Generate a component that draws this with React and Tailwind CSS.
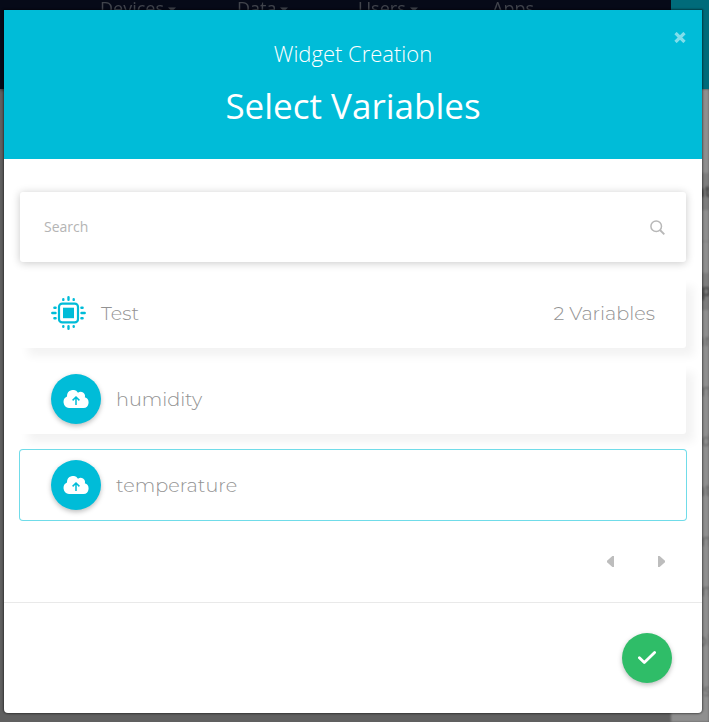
const navItems = [
  { label: "Devices", caret: true, box: "w-[137px]" },
  { label: "Data", caret: true, box: "w-[121px]" },
  { label: "Users", caret: true, box: "w-[134px]" },
  { label: "Apps", caret: false, box: "w-[80px]" },
];

const sideRows = [
  { text: "Dat", heading: true },
  { text: "", divider: true },
  { text: "App", heading: true },
  { text: "Var" },
  { text: "Tin" },
  { text: "Red" },
  { text: "Dat" },
  { text: "Con" },
  { text: "Min" },
  { text: "Col" },
  { text: "Us" },
];

const variables = [
  { name: "humidity", selected: false },
  { name: "temperature", selected: true },
];

function Backdrop() {
  return (
    <div className="flex h-full flex-col bg-[#606060]">
      <div className="flex h-[89px] shrink-0 bg-[#060a18] shadow-[0_1px_3px_#333]">
        <nav className="flex w-[671px] pl-[100px] text-[18px] leading-[16px] text-[#41444c] blur-[0.5px]">
          {navItems.map((item) => (
            <div key={item.label} className={`flex shrink-0 gap-1 ${item.box}`}>
              <span>{item.label}</span>
              {item.caret && (
                <svg width="8" height="18" viewBox="0 0 8 18" fill="currentColor">
                  <path d="M0 7.5h8l-4 4z" />
                </svg>
              )}
            </div>
          ))}
        </nav>
        <div className="flex-1 bg-[#006b7a]" />
      </div>
      <div className="flex flex-1 justify-end overflow-hidden">
        <aside className="w-[38px] bg-[#8f8f8f] pt-[84px] text-[16px] text-[#666] blur-[0.8px]">
          {sideRows.map((row, i) => (
            <div
              key={i}
              className={`flex h-[37px] items-center justify-end ${
                row.heading
                  ? "mb-[12.5px] bg-[#7e7e7e] font-semibold text-[#444]"
                  : "mb-[13px]"
              }`}
            >
              {row.divider ? (
                <span className="h-px w-full bg-[#808080]" />
              ) : (
                <span className="-mr-0.5 -mt-0.5">{row.text}</span>
              )}
            </div>
          ))}
        </aside>
      </div>
    </div>
  );
}

function ChipIcon() {
  return (
    <svg width="35" height="34" viewBox="0 0 35 34" fill="none" stroke="#00bcd8" strokeLinecap="round">
      <rect x="8" y="7.6" width="19" height="18.8" rx="3.2" strokeWidth="2.2" />
      <rect x="12" y="11.7" width="11" height="10.5" fill="#00bcd8" stroke="none" />
      <path
        strokeWidth="2.4"
        d="M17.5 1.2v2.6M17.5 30.2v2.6M1.3 17h3.2M30.5 17h3.2M12.3 3.2v.7M22.7 3.2v.7M12.3 30.1v.7M22.7 30.1v.7M3.4 11.8h1.2M3.4 22.2h1.2M30.4 11.8h1.2M30.4 22.2h1.2"
      />
    </svg>
  );
}

function CloudBadge() {
  return (
    <span className="flex size-[50px] shrink-0 items-center justify-center rounded-full bg-[#00bcd8] shadow-[0_2px_5px_rgba(0,0,0,0.26)]">
      <svg width="26" height="18" viewBox="0 0 26 18" className="-mt-px">
        <path
          fill="#fff"
          d="M6 18A6 6 0 0 1 4 6.6V6a6 6 0 0 1 11-3.3A4.3 4.3 0 0 1 21.8 7.3A5.5 5.5 0 0 1 20.5 18z"
        />
        <path fill="none" stroke="#00bcd8" strokeWidth="1.5" d="M13 15V7M9.6 10.4L13 7l3.4 3.4" />
      </svg>
    </span>
  );
}

export default function App() {
  return (
    <div className="relative h-[722px] w-[709px] overflow-hidden font-['Open_Sans',sans-serif]">
      <Backdrop />
      <div
        role="dialog"
        className="absolute top-[10px] left-1 flex h-[703px] w-[698px] flex-col overflow-hidden rounded-b-[4px] bg-white shadow-[0_0_2px_1px_rgba(0,0,0,0.45)]"
      >
        <header className="relative flex h-[149px] shrink-0 flex-col items-center bg-[#00bcd8] text-white">
          <p className="mt-[27px] text-[22px] leading-[32px] font-light">Widget Creation</p>
          <h1 className="mt-[12px] text-[35px] leading-[50px]">Select Variables</h1>
          <button aria-label="Close" className="absolute top-[22px] right-[16px] text-[#80deeb]">
            <svg width="12" height="11" viewBox="0 0 12 11" stroke="currentColor" strokeWidth="3.2">
              <path d="M1.5 1l9 9M10.5 1l-9 9" />
            </svg>
          </button>
        </header>

        <main className="flex h-[444px] shrink-0 flex-col border-b border-[#e9e9e9] px-4 pt-[33px] font-['Montserrat','Inter',sans-serif] text-[#929292]">
          <div className="flex h-[70px] shrink-0 items-center justify-between rounded-[3px] bg-white pr-[21.5px] pl-6 font-['Open_Sans',sans-serif] text-[14px] text-[#b4b4b4] shadow-[0_1px_8px_rgba(0,0,0,0.22)]">
            <span className="pb-0.5">Search</span>
            <svg width="15" height="15" viewBox="0 0 15 15" fill="none" stroke="#b8b8b8" strokeWidth="1.5">
              <circle cx="6.2" cy="6.2" r="5.3" />
              <path strokeWidth="1.9" d="M10 10l4.3 4.3" />
            </svg>
          </div>

          <div className="mt-4 flex h-[70px] shrink-0 items-center rounded-[3px] bg-white px-[31px] text-[19.25px] font-light shadow-[8px_8px_10px_rgba(0,0,0,0.05)]">
            <ChipIcon />
            <span className="ml-[15px]">Test</span>
            <span className="ml-auto">2 Variables</span>
          </div>

          {variables.map((v) => (
            <div
              key={v.name}
              className={`mt-4 flex h-[70px] shrink-0 items-center rounded-[3px] bg-white pl-[31px] text-[19.25px] font-light ${
                v.selected
                  ? "shadow-[0_0_0_1px_#70dce9]"
                  : "shadow-[8px_8px_10px_rgba(0,0,0,0.05)]"
              }`}
            >
              <CloudBadge />
              <span className="ml-[15px]">{v.name}</span>
            </div>
          ))}

          <div className="mt-[35.5px] flex justify-end gap-[44px] pr-[21px] text-[#bdbdbd]">
            <svg width="7" height="11" viewBox="0 0 7 11" fill="currentColor">
              <path d="M7 0v11H5.4L0 6.2V4.8L5.4 0z" />
            </svg>
            <svg width="7" height="11" viewBox="0 0 7 11" fill="currentColor">
              <path d="M0 0v11h1.6L7 6.2V4.8L1.6 0z" />
            </svg>
          </div>
        </main>

        <footer className="flex flex-1 items-center justify-end pr-[30px]">
          <button
            aria-label="Confirm"
            className="flex size-[50px] items-center justify-center rounded-full bg-[#2fbd68] shadow-[0_2px_5px_rgba(0,0,0,0.26)]"
          >
            <svg width="20" height="14" viewBox="0 0 20 14" fill="none" stroke="#fff" strokeWidth="2.8" strokeLinecap="round" strokeLinejoin="round">
              <path d="M2.4 6.7L7.3 11.6L17.6 1.5" />
            </svg>
          </button>
        </footer>
      </div>
    </div>
  );
}
